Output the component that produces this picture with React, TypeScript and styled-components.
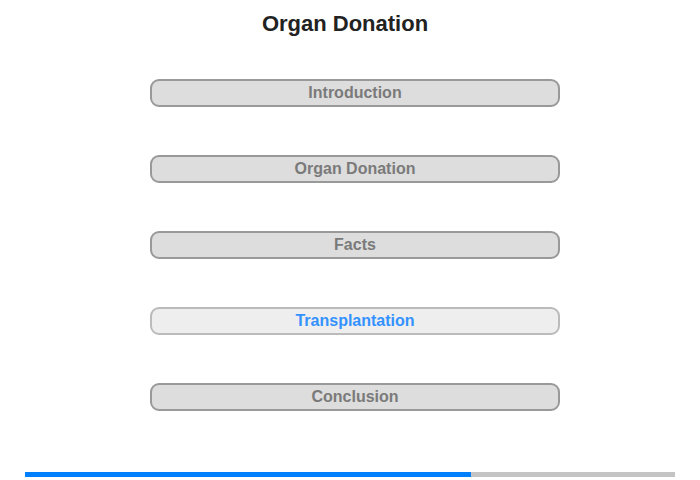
import React from "react";
import styled, { createGlobalStyle } from "styled-components";

const Global = createGlobalStyle`
  html, body { margin: 0; padding: 0; background: #fff; }
  body { font-family: "Liberation Sans", Arial, sans-serif; }
`;

const Page = styled.div`
  width: 700px;
  height: 480px;
  display: flex;
  flex-direction: column;
  align-items: center;
  box-sizing: border-box;
  padding-top: 11px;
`;

const Title = styled.h1`
  margin: 0 10px 0 0;
  font-size: 22px;
  line-height: 26px;
  font-weight: bold;
  color: #222;
`;

const Menu = styled.nav`
  margin: 42px 0 0 10px;
  display: flex;
  flex-direction: column;
  gap: 48px;
`;

const Item = styled.div<{ $active?: boolean }>`
  width: 410px;
  height: 28px;
  box-sizing: border-box;
  border: 2px solid ${(p) => (p.$active ? "#bbbbbb" : "#999999")};
  border-radius: 9px;
  background: ${(p) => (p.$active ? "#eeeeee" : "#dddddd")};
  color: ${(p) => (p.$active ? "#3392ff" : "#7a7a7a")};
  font-size: 16px;
  font-weight: bold;
  line-height: 24px;
  text-align: center;
`;

const Progress = styled.div`
  margin-top: auto;
  margin-bottom: 3px;
  width: 650px;
  height: 5px;
  background: #c4c4c4;
  display: flex;
`;

const Fill = styled.div`
  height: 100%;
  background: #0080ff;
`;

const items = ["Introduction", "Organ Donation", "Facts", "Transplantation", "Conclusion"];

export default function App() {
  return (
    <>
      <Global />
      <Page>
        <Title>Organ Donation</Title>
        <Menu>
          {items.map((t) => (
            <Item key={t} $active={t === "Transplantation"}>
              {t}
            </Item>
          ))}
        </Menu>
        <Progress>
          <Fill style={{ width: `${(446 / 650) * 100}%` }} />
        </Progress>
      </Page>
    </>
  );
}
